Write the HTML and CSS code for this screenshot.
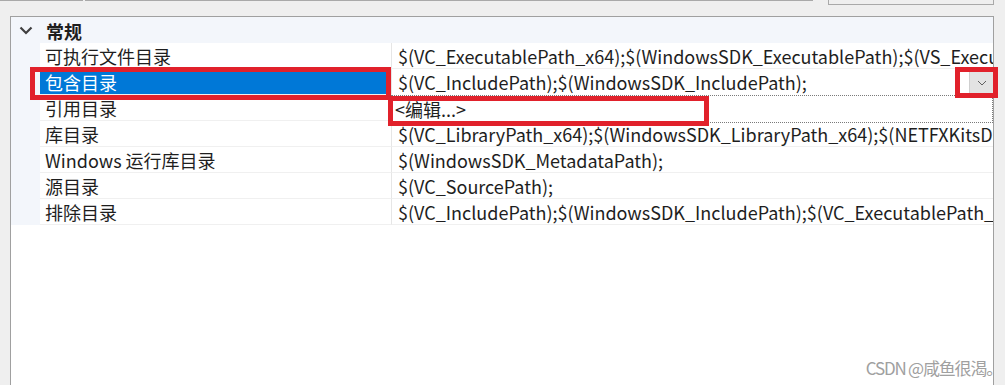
FILE: index.html
```html
<!DOCTYPE html>
<html lang="zh-CN">
<head>
  <meta charset="UTF-8" />
  <title>VC++ 目录</title>
  <link rel="stylesheet" href="styles.css">
</head>
<body>
  <main class="page">
    <div class="tabs">
      <div class="tab tab-a"></div>
      <div class="tab tab-b"></div>
      <div class="tab tab-c"></div>
    </div>

    <div class="grid">
      <div class="cat">
        <span class="chev">
          <svg width="14" height="9" viewBox="0 0 14 9"><path d="M1.5 1.5 L7 7 L12.5 1.5" fill="none" stroke="#404040" stroke-width="2.2"/></svg>
        </span>
        <span class="cat-name">常规</span>
      </div>

      <div class="row">
        <div class="gutter"></div>
        <div class="name">可执行文件目录</div>
        <div class="value">$(VC_ExecutablePath_x64);$(WindowsSDK_ExecutablePath);$(VS_ExecutablePath);$(MSBuild_ExecutablePath)</div>
      </div>
      <div class="row selected">
        <div class="gutter"></div>
        <div class="name">包含目录</div>
        <div class="value editor">
          <span class="edit-text">$(VC_IncludePath);$(WindowsSDK_IncludePath);</span>
          <span class="drop">
            <svg width="10" height="6" viewBox="0 0 10 6"><path d="M1 1 L5 5 L9 1" fill="none" stroke="#606060" stroke-width="1"/></svg>
          </span>
          <div class="popup">&lt;编辑...&gt;</div>
        </div>
      </div>
      <div class="row">
        <div class="gutter"></div>
        <div class="name">引用目录</div>
        <div class="value"></div>
      </div>
      <div class="row">
        <div class="gutter"></div>
        <div class="name">库目录</div>
        <div class="value">$(VC_LibraryPath_x64);$(WindowsSDK_LibraryPath_x64);$(NETFXKitsDir)Lib\um\x64</div>
      </div>
      <div class="row">
        <div class="gutter"></div>
        <div class="name">Windows 运行库目录</div>
        <div class="value">$(WindowsSDK_MetadataPath);</div>
      </div>
      <div class="row">
        <div class="gutter"></div>
        <div class="name">源目录</div>
        <div class="value">$(VC_SourcePath);</div>
      </div>
      <div class="row">
        <div class="gutter"></div>
        <div class="name">排除目录</div>
        <div class="value">$(VC_IncludePath);$(WindowsSDK_IncludePath);$(VC_ExecutablePath_x64)</div>
      </div>
    </div>

    <!-- annotation boxes -->
    <div class="mark mark-name"></div>
    <div class="mark mark-edit"></div>
    <div class="mark mark-drop"></div>

    <div class="watermark">CSDN @咸鱼很渴。</div>
  </main>
</body>
</html>
```

FILE: styles.css
```css
* {
  margin: 0;
  box-sizing: border-box;
}

body {
  background: #efefef;
  font-family: "Noto Sans CJK SC", "Noto Sans", sans-serif;
  font-size: 18px;
  color: #1e1e1e;
}

.page {
  position: relative;
  width: 1005px;
  height: 385px;
  overflow: hidden;
}

.tabs {
  height: 16px;
  position: relative;
}

.tab {
  position: absolute;
  top: -20px;
  height: 21px;
  border: 1px solid #a9a9a9;
  background: #efefef;
}

.tab-a { left: -2px; width: 85px; }
.tab-b { left: 85px; width: 728px; }
.tab-c { left: 828px; width: 166px; height: 25px; }

.grid {
  margin-left: 10px;
  width: 984px;
  height: 369px;
  background: #fff;
  border: 1px solid #a0a0a0;
  border-bottom: 0;
}

.cat {
  height: 26px;
  background: #f3f6fb;
  display: flex;
  align-items: center;
}

.chev {
  width: 35px;
  display: flex;
  justify-content: center;
  padding-right: 5px;
}

.cat-name {
  font-weight: 700;
  padding-top: 1px;
}

.row {
  display: flex;
  height: 26px;
  line-height: 26px;
  white-space: nowrap;
}

.gutter {
  width: 29px;
  flex: none;
  background: #f3f6fb;
}

.name {
  width: 351px;
  flex: none;
  padding-left: 5px;
  border-bottom: 1px solid #f0f0f0;
}

.value {
  flex: 1;
  min-width: 0;
  overflow: hidden;
  padding-left: 6px;
  border-left: 1px solid #e6e6e6;
  border-bottom: 1px solid #f0f0f0;
}

.row.selected .name {
  background: #0078d7;
  color: #fff;
}

.editor {
  position: relative;
  overflow: visible;
  display: flex;
  border-bottom-color: #fff;
}

.edit-text {
  flex: 1;
}

.drop {
  width: 24px;
  height: 25px;
  margin-top: 1px;
  background: #e3e3e3;
  border-left: 1px solid #cfcfcf;
  display: flex;
  align-items: center;
  justify-content: center;
}

.popup {
  position: absolute;
  left: -1px;
  right: 0;
  top: 26px;
  height: 28px;
  line-height: 26px;
  padding-left: 3px;
  background: #fff;
  border: 1px dotted #7a7a7a;
  z-index: 2;
}

.mark {
  position: absolute;
  border: 5px solid #e1212b;
  z-index: 3;
}

.mark-name { left: 30px; top: 67px; width: 361px; height: 33px; }
.mark-edit { left: 388px; top: 96px; width: 321px; height: 30px; }
.mark-drop { left: 955px; top: 67px; width: 43px; height: 31px; }

.watermark {
  position: absolute;
  right: 3px;
  bottom: 5px;
  font-size: 17px;
  color: #a0a0a0;
  letter-spacing: -1.2px;
  text-shadow: 0 0 1px #fff;
}
```
